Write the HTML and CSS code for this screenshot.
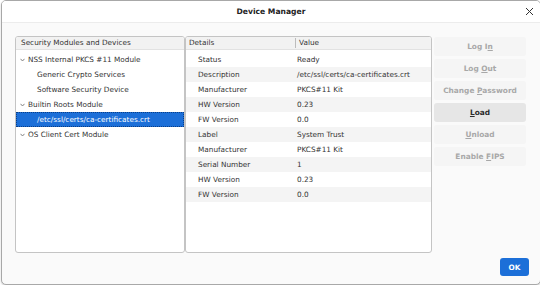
FILE: index.html
```html
<!DOCTYPE html>
<html lang="en">
<head>
    <meta charset="UTF-8">
    <title>Device Manager</title>
    <link rel="stylesheet" href="styles.css">
</head>
<body>

<div class="dialog">
    <div class="titlebar">
        <span class="title">Device Manager</span>
        <svg class="close" width="9" height="9" viewBox="0 0 9 9"><path d="M1 1 L8 8 M8 1 L1 8" stroke="#333" stroke-width="1" fill="none"/></svg>
    </div>

    <div class="content">
        <div class="panel modules">
            <div class="panel-head">Security Modules and Devices</div>
            <ul class="tree">
                <li class="node"><svg class="twisty" width="5" height="4" viewBox="0 0 5 4"><path d="M0.5 0.8 L2.5 3 L4.5 0.8" stroke="#777" stroke-width="0.9" fill="none"/></svg>NSS Internal PKCS #11 Module</li>
                <li class="leaf">Generic Crypto Services</li>
                <li class="leaf">Software Security Device</li>
                <li class="node"><svg class="twisty" width="5" height="4" viewBox="0 0 5 4"><path d="M0.5 0.8 L2.5 3 L4.5 0.8" stroke="#777" stroke-width="0.9" fill="none"/></svg>Builtin Roots Module</li>
                <li class="leaf selected">/etc/ssl/certs/ca-certificates.crt</li>
                <li class="node"><svg class="twisty" width="5" height="4" viewBox="0 0 5 4"><path d="M0.5 0.8 L2.5 3 L4.5 0.8" stroke="#777" stroke-width="0.9" fill="none"/></svg>OS Client Cert Module</li>
            </ul>
        </div>

        <div class="panel details">
            <div class="panel-head cols">
                <span class="col-name">Details</span>
                <span class="col-value">Value</span>
            </div>
            <div class="rows">
                <div class="row"><span class="name">Status</span><span class="value">Ready</span></div>
                <div class="row"><span class="name">Description</span><span class="value">/etc/ssl/certs/ca-certificates.crt</span></div>
                <div class="row"><span class="name">Manufacturer</span><span class="value">PKCS#11 Kit</span></div>
                <div class="row"><span class="name">HW Version</span><span class="value">0.23</span></div>
                <div class="row"><span class="name">FW Version</span><span class="value">0.0</span></div>
                <div class="row"><span class="name">Label</span><span class="value">System Trust</span></div>
                <div class="row"><span class="name">Manufacturer</span><span class="value">PKCS#11 Kit</span></div>
                <div class="row"><span class="name">Serial Number</span><span class="value">1</span></div>
                <div class="row"><span class="name">HW Version</span><span class="value">0.23</span></div>
                <div class="row"><span class="name">FW Version</span><span class="value">0.0</span></div>
            </div>
        </div>

        <div class="actions">
            <button class="action">Log I<u>n</u></button>
            <button class="action">Log <u>O</u>ut</button>
            <button class="action">Change <u>P</u>assword</button>
            <button class="action active"><u>L</u>oad</button>
            <button class="action"><u>U</u>nload</button>
            <button class="action">Enable <u>F</u>IPS</button>
        </div>
    </div>

    <div class="footer">
        <button class="ok">OK</button>
    </div>
</div>

</body>
</html>
```

FILE: styles.css
```css
html, body {
    margin: 0;
    padding: 0;
    background-color: #ffffff;
}
body {
    font-family: "DejaVu Sans", sans-serif;
    font-size: 7.3px;
    color: #333333;
}
.dialog {
    width: 538px;
    height: 283px;
    margin-left: 1px;
    border: 1px solid #a8a8a8;
    border-radius: 5px;
    background-color: #fafafa;
    display: flex;
    flex-direction: column;
    overflow: hidden;
    box-shadow: 0 1px 2px rgba(0, 0, 0, 0.2);
}
.titlebar {
    height: 21px;
    flex: none;
    display: flex;
    align-items: center;
    justify-content: center;
    position: relative;
    background-color: #ffffff;
    border-bottom: 1px solid #ececec;
}
.title {
    font-weight: bold;
    font-size: 7.6px;
    color: #222;
}
.close {
    position: absolute;
    right: 6px;
    top: 6px;
}
.content {
    display: flex;
    padding: 13px 0 0 13px;
    height: 217px;
}
.panel {
    border: 1px solid #c4c4c4;
    border-radius: 3px;
    background-color: #ffffff;
    box-sizing: border-box;
    overflow: hidden;
}
.modules {
    width: 170px;
}
.details {
    width: 247px;
}
.panel-head {
    height: 13px;
    line-height: 12px;
    padding-left: 5px;
    background-color: #f2f2f2;
    border-bottom: 1px solid #e2e2e2;
    box-sizing: border-box;
}
.cols {
    display: flex;
    padding-left: 3px;
}
.col-name {
    width: 106px;
    border-right: 1px solid #bcbcbc;
    margin: 1px 0;
    line-height: 10px;
}
.col-value {
    padding-left: 3px;
}
.tree {
    list-style-type: none;
    margin: 2px 0 0 0;
    padding: 0;
}
.tree li {
    height: 15px;
    line-height: 15px;
    white-space: nowrap;
}
.node {
    padding-left: 4px;
}
.twisty {
    margin-right: 3px;
    vertical-align: 0;
}
.leaf {
    padding-left: 21px;
}
.selected {
    background-color: #1c6fd8;
    color: #ffffff;
    outline: 1px dotted #0b3f86;
    outline-offset: -1px;
}
.rows {
    margin-top: 2px;
}
.row {
    display: flex;
    height: 15px;
    line-height: 15px;
    white-space: nowrap;
}
.row:nth-child(even) {
    background-color: #f4f4f4;
}
.name {
    width: 99px;
    padding-left: 12px;
    flex: none;
}
.actions {
    display: flex;
    flex-direction: column;
    gap: 3px;
    margin-left: 2px;
    padding-top: 1px;
}
.action {
    width: 92px;
    height: 19px;
    border: none;
    border-radius: 3px;
    background-color: #f5f5f5;
    color: #a8a8a8;
    font-family: "DejaVu Sans", sans-serif;
    font-size: 7.4px;
    font-weight: bold;
    padding: 0;
}
.action.active {
    background-color: #e6e6e6;
    color: #2a2a2a;
}
.footer {
    display: flex;
    justify-content: flex-end;
    padding: 5px 11px 0 0;
}
.ok {
    width: 29px;
    height: 18px;
    border: none;
    border-radius: 3px;
    background-color: #1c6fd8;
    color: #ffffff;
    font-family: "DejaVu Sans", sans-serif;
    font-size: 7.3px;
    font-weight: bold;
    padding: 0;
}
```
